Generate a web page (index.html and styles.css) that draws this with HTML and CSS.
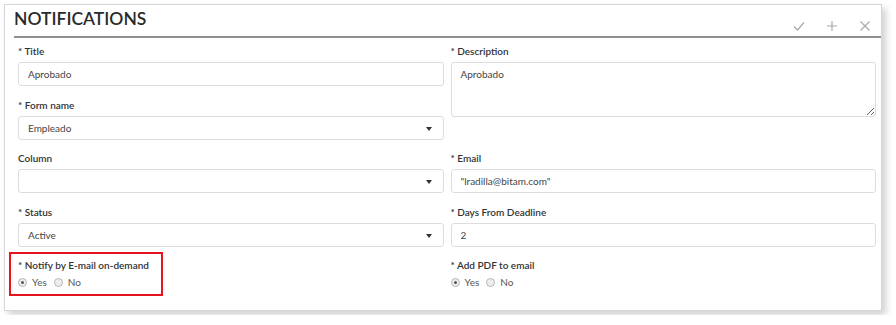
FILE: index.html
```html
<!DOCTYPE html>
<html lang="en">
<head>
    <meta charset="UTF-8">
    <title>Notifications</title>
    <link rel="stylesheet" href="styles.css">
</head>
<body>
    <div class="panel">
        <div class="panel-header">
            <h2>NOTIFICATIONS</h2>
            <div class="actions">
                <svg width="12" height="12" viewBox="0 0 12 12"><path d="M1 6.5 L4.5 10 L11 2.5" fill="none" stroke="#aaa" stroke-width="1.2"/></svg>
                <svg width="12" height="12" viewBox="0 0 12 12"><path d="M6 1 V11 M1 6 H11" fill="none" stroke="#aaa" stroke-width="1.2"/></svg>
                <svg width="12" height="12" viewBox="0 0 12 12"><path d="M1.5 1.5 L10.5 10.5 M10.5 1.5 L1.5 10.5" fill="none" stroke="#aaa" stroke-width="1.2"/></svg>
            </div>
        </div>

        <form class="form">
            <div class="col">
                <div class="field">
                    <label>* Title</label>
                    <input type="text" class="input" value="Aprobado">
                </div>
                <div class="field">
                    <label>* Form name</label>
                    <div class="select">Empleado</div>
                </div>
            </div>
            <div class="col">
                <div class="field">
                    <label>* Description</label>
                    <textarea class="input textarea">Aprobado</textarea>
                </div>
            </div>

            <div class="field">
                <label>Column</label>
                <div class="select"></div>
            </div>
            <div class="field">
                <label>* Email</label>
                <input type="text" class="input" value="&quot;lradilla@bitam.com&quot;">
            </div>

            <div class="field">
                <label>* Status</label>
                <div class="select">Active</div>
            </div>
            <div class="field">
                <label>* Days From Deadline</label>
                <input type="text" class="input" value="2">
            </div>

            <div class="field highlight">
                <label>* Notify by E-mail on-demand</label>
                <div class="radios">
                    <span class="radio checked"></span><span class="radio-label">Yes</span>
                    <span class="radio"></span><span class="radio-label">No</span>
                </div>
            </div>
            <div class="field">
                <label>* Add PDF to email</label>
                <div class="radios">
                    <span class="radio checked"></span><span class="radio-label">Yes</span>
                    <span class="radio"></span><span class="radio-label">No</span>
                </div>
            </div>
        </form>
    </div>
</body>
</html>
```

FILE: styles.css
```css
* {
    margin: 0;
    padding: 0;
    box-sizing: border-box;
}

body {
    font-family: Lato, "Liberation Sans", sans-serif;
    background: #fff;
    color: #333;
    padding: 4px;
}

.panel {
    width: 878px;
    height: 307px;
    background: #fff;
    border: 1px solid #d6d6d6;
    box-shadow: 4px 4px 7px rgba(0, 0, 0, 0.18);
}

.panel-header {
    margin-left: 9px;
    height: 33px;
    border-bottom: 2px solid #8f8f8f;
    display: flex;
    align-items: flex-end;
    justify-content: space-between;
    padding-bottom: 6px;
}

.panel-header h2 {
    font-size: 17.5px;
    font-weight: 600;
    color: #2b2b2b;
    line-height: 22px;
}

.actions {
    display: flex;
    gap: 21px;
    padding-right: 10px;
    margin-bottom: -2px;
}

.form {
    display: grid;
    grid-template-columns: 1fr 1fr;
    column-gap: 7px;
    padding: 6px 5px 0 13px;
}

.field {
    margin-bottom: 11.5px;
}

label {
    display: block;
    font-size: 10px;
    font-weight: 600;
    line-height: 14px;
    margin-bottom: 4px;
    color: #333;
}

.input,
.select {
    display: block;
    width: 100%;
    height: 24px;
    border: 1px solid #ddd;
    border-radius: 3px;
    font-family: Lato, "Liberation Sans", sans-serif;
    font-size: 10px;
    color: #444;
    padding: 0 9px;
    line-height: 22px;
    background: #fff;
}

.textarea {
    height: 55px;
    resize: vertical;
    padding-top: 4px;
    line-height: 14px;
}

.select {
    position: relative;
}

.select::after {
    content: "";
    position: absolute;
    right: 11px;
    top: 10px;
    border-left: 3.5px solid transparent;
    border-right: 3.5px solid transparent;
    border-top: 4px solid #333;
}

.radios {
    display: flex;
    align-items: center;
    height: 12px;
    font-size: 10px;
    color: #555;
}

.radio {
    width: 9px;
    height: 9px;
    border-radius: 50%;
    border: 1px solid #b5b5b5;
    background: #eee;
    display: flex;
    align-items: center;
    justify-content: center;
    margin-right: 5px;
}

.radio.checked::before {
    content: "";
    width: 3px;
    height: 3px;
    border-radius: 50%;
    background: #555;
}

.radio-label {
    margin-right: 7px;
}

.highlight {
    position: relative;
}

.highlight::after {
    content: "";
    position: absolute;
    left: -9px;
    top: -6px;
    width: 150px;
    height: 40px;
    border: 2px solid #e8141b;
}
```
